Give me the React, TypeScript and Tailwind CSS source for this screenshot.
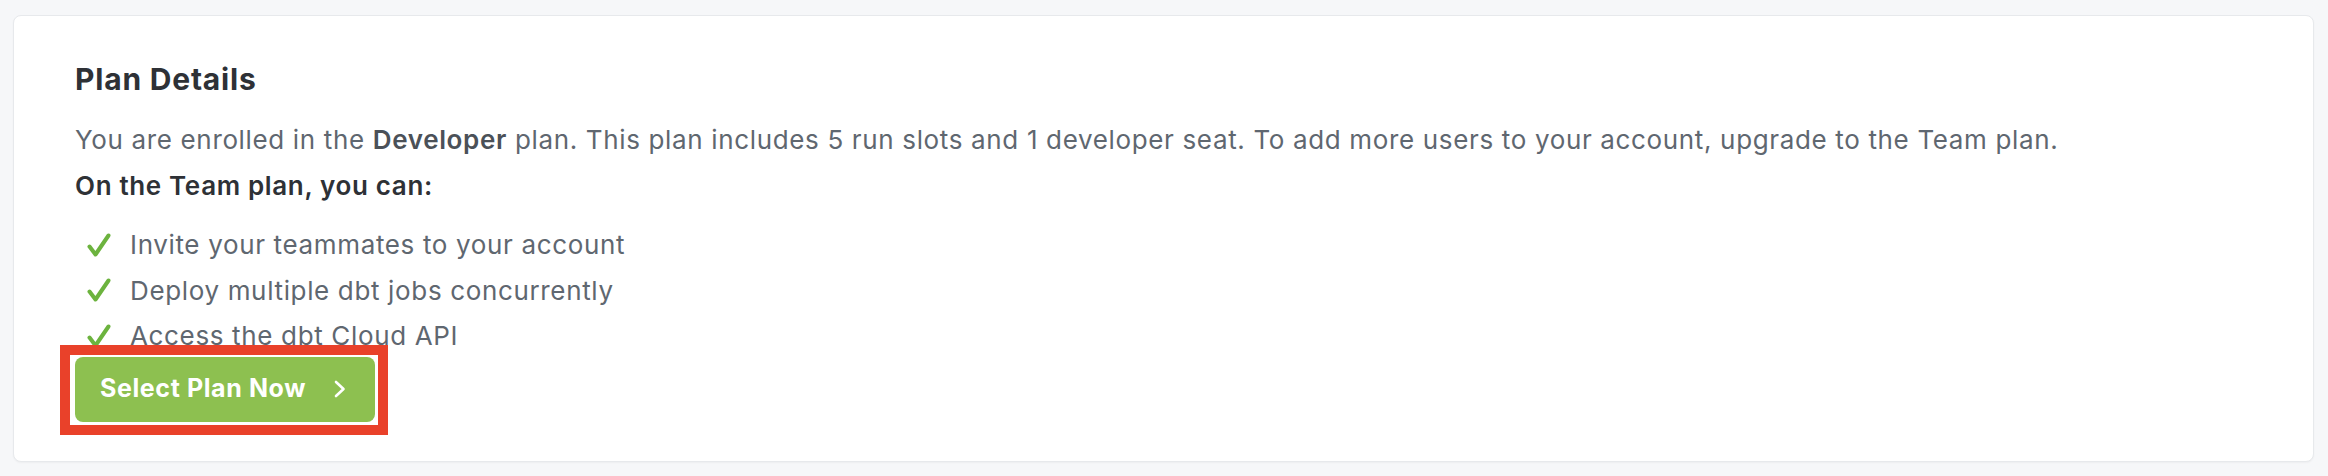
import React from 'react';

const features = [
  'Invite your teammates to your account',
  'Deploy multiple dbt jobs concurrently',
  'Access the dbt Cloud API',
];

const Check: React.FC = () => (
  <svg width="24" height="24" viewBox="0 0 24 24" className="shrink-0">
    <path
      d="M2.5 13.5 L8.5 21.5 L21.5 2.5"
      fill="none"
      stroke="#6cb33e"
      strokeWidth="4"
      strokeLinecap="round"
      strokeLinejoin="round"
    />
  </svg>
);

const App: React.FC = () => {
  return (
    <div
      className="h-[476px] bg-[#f6f7f9] pt-[15px] pl-[13px] pr-[14px] pb-[14px]"
      style={{ fontFamily: 'Inter, "Noto Sans", sans-serif' }}
    >
      <div className="h-full rounded-lg border border-[#e7e9ec] bg-white pl-[61px] pt-[46px] shadow-[0_1px_2px_rgba(0,0,0,0.04)]">
        <h2 className="text-[30px] leading-[34px] font-bold tracking-[0.8px] text-[#2e3136]">Plan Details</h2>

        <p className="mt-[21px] text-[26px] leading-[46px] tracking-[0.65px] text-[#5f6770]">
          You are enrolled in the <span className="font-semibold text-[#4b5158]">Developer</span> plan. This plan
          includes 5 run slots and 1 developer seat. To add more users to your account, upgrade to the Team plan.
        </p>
        <p className="text-[26px] leading-[46px] font-semibold tracking-[0.65px] text-[#2e3136]">On the Team plan, you can:</p>

        <ul className="mt-[13px]">
          {features.map((f) => (
            <li key={f} className="flex items-center h-[45.5px] pl-[12px] gap-[19px] text-[26px] tracking-[0.65px] text-[#5f6770]">
              <Check />
              <span>{f}</span>
            </li>
          ))}
        </ul>

        <div className="relative mt-[-2px] inline-flex">
          <div className="absolute -left-[15px] -top-[12px] -right-[13px] -bottom-[13px] border-[10px] border-[#e9412a] bg-white" />
          <button className="relative flex items-center h-[65px] w-[300px] rounded-lg bg-[#8dc050] pl-[25px] text-[25px] font-bold tracking-[0.6px] text-white">
            Select Plan Now
            <svg width="12" height="18" viewBox="0 0 12 18" className="ml-auto mr-[29px]">
              <path d="M2 2 L9.5 9 L2 16" fill="none" stroke="white" strokeWidth="2.6" strokeLinecap="round" strokeLinejoin="round" />
            </svg>
          </button>
        </div>
      </div>
    </div>
  );
};

export default App;
